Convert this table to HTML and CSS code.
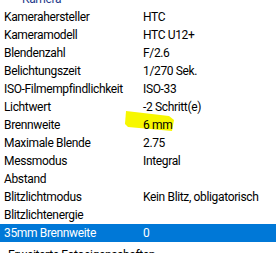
FILE: index.html
```html
<!DOCTYPE html>
<html lang="de">

<head>
    <meta charset="UTF-8">
    <title>Details</title>
    <link rel="stylesheet" href="styles.css">
</head>

<body>
    <div class="details">
        <div class="group">Kamera</div>

        <div class="row"><span class="name">Kamerahersteller</span><span class="value">HTC</span></div>
        <div class="row"><span class="name">Kameramodell</span><span class="value">HTC U12+</span></div>
        <div class="row"><span class="name">Blendenzahl</span><span class="value">F/2.6</span></div>
        <div class="row"><span class="name">Belichtungszeit</span><span class="value">1/270 Sek.</span></div>
        <div class="row"><span class="name">ISO-Filmempfindlichkeit</span><span class="value">ISO-33</span></div>
        <div class="row"><span class="name">Lichtwert</span><span class="value">-2 Schritt(e)</span></div>
        <div class="row">
            <span class="name">Brennweite</span>
            <span class="value marked">
                <svg class="marker" width="50" height="22" viewBox="0 0 50 22">
                    <polygon points="1,1 44,6 49,10 47,21 3,17 0,14" fill="#f7f700" />
                </svg>
                <span class="text">6 mm</span>
            </span>
        </div>
        <div class="row"><span class="name">Maximale Blende</span><span class="value">2.75</span></div>
        <div class="row"><span class="name">Messmodus</span><span class="value">Integral</span></div>
        <div class="row"><span class="name">Abstand</span><span class="value"></span></div>
        <div class="row"><span class="name">Blitzlichtmodus</span><span class="value">Kein Blitz, obligatorisch</span></div>
        <div class="row"><span class="name">Blitzlichtenergie</span><span class="value"></span></div>
        <div class="row selected"><span class="name">35mm Brennweite</span><span class="value">0</span></div>

        <div class="group next">Erweiterte Fotoeigenschaften</div>
    </div>
</body>

</html>
```

FILE: styles.css
```css
body {
    margin: 0;
    background-color: #ffffff;
    font-family: Roboto, "Liberation Sans", Arial, sans-serif;
    font-size: 12px;
    letter-spacing: -0.35px;
    color: #000000;
    overflow: hidden;
}

.details {
    display: flex;
    flex-direction: column;
    width: 276px;
}

.group {
    height: 18px;
    line-height: 18px;
    margin-top: -10px;
    padding-left: 22px;
    color: #1e3b8a;
}

.group.next {
    margin-top: 0;
    padding-top: 4px;
    padding-left: 8px;
    color: #000000;
}

.row {
    display: grid;
    grid-template-columns: 139px 1fr;
    height: 18px;
    line-height: 18px;
}

.name {
    padding-left: 4px;
    white-space: nowrap;
}

.value {
    padding-left: 4px;
    white-space: nowrap;
}

.selected {
    background-color: #0078d7;
    color: #ffffff;
}

.marked {
    position: relative;
}

.marker {
    position: absolute;
    left: -14px;
    top: -6px;
}

.marked .text {
    position: relative;
}
```
